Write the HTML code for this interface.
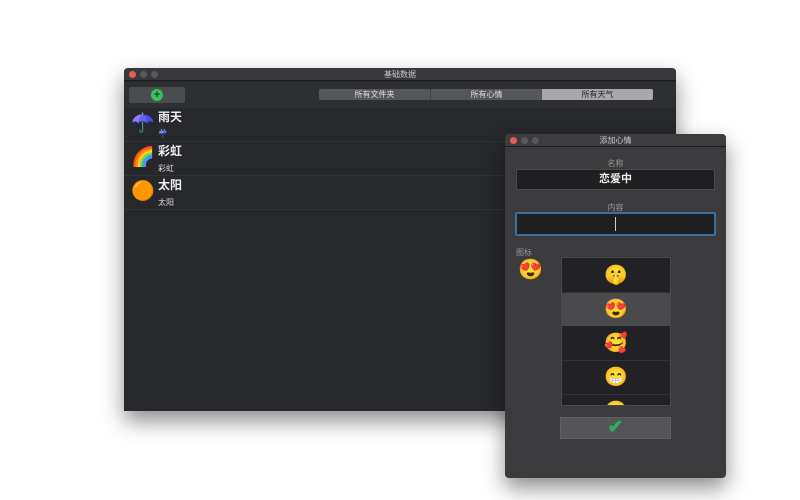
<!DOCTYPE html>
<html><head><meta charset="utf-8"><style>
*{margin:0;padding:0;box-sizing:border-box}
body{width:800px;height:500px;background:#fff;position:relative;overflow:hidden;font-family:"Liberation Sans","Noto Sans CJK SC",sans-serif}
.win{position:absolute;background:#27282c;box-shadow:0 10px 22px rgba(0,0,0,.45);border-radius:4px 4px 0 0;overflow:hidden}
.tb{height:13px;background:#38393c;border-bottom:1px solid #1c1c1e;position:relative;text-align:center;font-size:8px;color:#c9c9c9;line-height:13px}
.dot{position:absolute;top:3px;width:7px;height:7px;border-radius:50%;background:#58595c}
.r{background:#ec5a53}
.row{position:absolute;left:0;right:0;height:34px;border-bottom:1px solid #333438}
.em{position:absolute;font-size:19px;line-height:22px}
.tt{position:absolute;left:34px;top:0px;color:#eee;font-size:12px;font-weight:bold}
.st{position:absolute;left:34px;top:21px;color:#ddd;font-size:8px}
.lbl{position:absolute;width:100%;text-align:center;color:#9a9a9c;font-size:8px}
</style></head><body>
<div class="win" style="left:124px;top:68px;width:552px;height:343px">
 <div class="tb"><span class="dot r" style="left:5px"></span><span class="dot" style="left:16px"></span><span class="dot" style="left:27px"></span>基础数据</div>
 <div style="position:absolute;top:14px;left:0;right:0;height:26px;background:#2e2f33"></div>
 <div style="position:absolute;left:5px;top:19px;width:56px;height:16px;background:#4b4c50;border-radius:2px"><div style="position:absolute;left:22px;top:2px;width:12px;height:12px;border-radius:50%;background:#35c25f;color:#143;font-size:11px;line-height:12px;text-align:center;font-weight:bold">+</div></div>
 <div style="position:absolute;left:195px;top:21px;width:334px;height:11px;background:#56575b;border-radius:2px;font-size:8px;color:#e0e0e0;line-height:11px;display:flex">
  <div style="flex:1;text-align:center;border-right:1px solid #3e3f42">所有文件夹</div>
  <div style="flex:1;text-align:center">所有心情</div>
  <div style="flex:1;text-align:center;background:#a8a8aa;color:#222;border-radius:0 2px 2px 0">所有天气</div>
 </div>
 <div class="row" style="top:40px"><span class="em" style="left:7px;top:5px">☂️</span><span class="tt">雨天</span><span class="st" style="color:#a07fe0">☔</span></div>
 <div class="row" style="top:74px"><span class="em" style="left:7px;top:5px">🌈</span><span class="tt">彩虹</span><span class="st">彩虹</span></div>
 <div class="row" style="top:108px"><span class="em" style="left:7px;top:5px">🟠</span><span class="tt">太阳</span><span class="st">太阳</span></div>
</div>
<div class="win" style="left:505px;top:134px;width:221px;height:344px;background:#3b3b3e;border-radius:4px">
 <div class="tb" style="background:#3d3d40"><span class="dot r" style="left:5px"></span><span class="dot" style="left:16px"></span><span class="dot" style="left:27px"></span>添加心情</div>
 <div class="lbl" style="top:24px">名称</div>
 <div style="position:absolute;left:11px;top:35px;width:199px;height:21px;background:#1f1f21;border:1px solid #4a4a4d;color:#eee;font-size:11px;font-weight:bold;text-align:center;line-height:19px">恋爱中</div>
 <div class="lbl" style="top:68px">内容</div>
 <div style="position:absolute;left:10px;top:78px;width:201px;height:24px;background:#1f1f21;border:2px solid #3a6f9e;border-radius:2px"><div style="position:absolute;left:98px;top:3px;width:1px;height:14px;background:#ccc"></div></div>
 <div style="position:absolute;left:11px;top:113px;color:#9a9a9c;font-size:8px">图标</div>
 <div class="em" style="left:13px;top:125px;font-size:20px">😍</div>
 <div style="position:absolute;left:56px;top:123px;width:110px;height:149px;background:#222226;border:1px solid #4a4a4d;overflow:hidden">
  <div style="height:35px;border-bottom:1px solid #333;text-align:center;font-size:19px;line-height:35px">🤫</div>
  <div style="height:33px;background:#4a4a4c;text-align:center;font-size:19px;line-height:33px">😍</div>
  <div style="height:35px;border-bottom:1px solid #333;text-align:center;font-size:19px;line-height:35px">🥰</div>
  <div style="height:34px;border-bottom:1px solid #333;text-align:center;font-size:19px;line-height:34px">😁</div>
  <div style="height:34px;text-align:center;font-size:19px;line-height:34px">😊</div>
 </div>
 <div style="position:absolute;left:55px;top:283px;width:111px;height:22px;background:#555558;border:1px solid #606063;text-align:center;color:#2fae5c;font-size:19px;line-height:20px;font-weight:bold">✔</div>
</div>
</body></html>
